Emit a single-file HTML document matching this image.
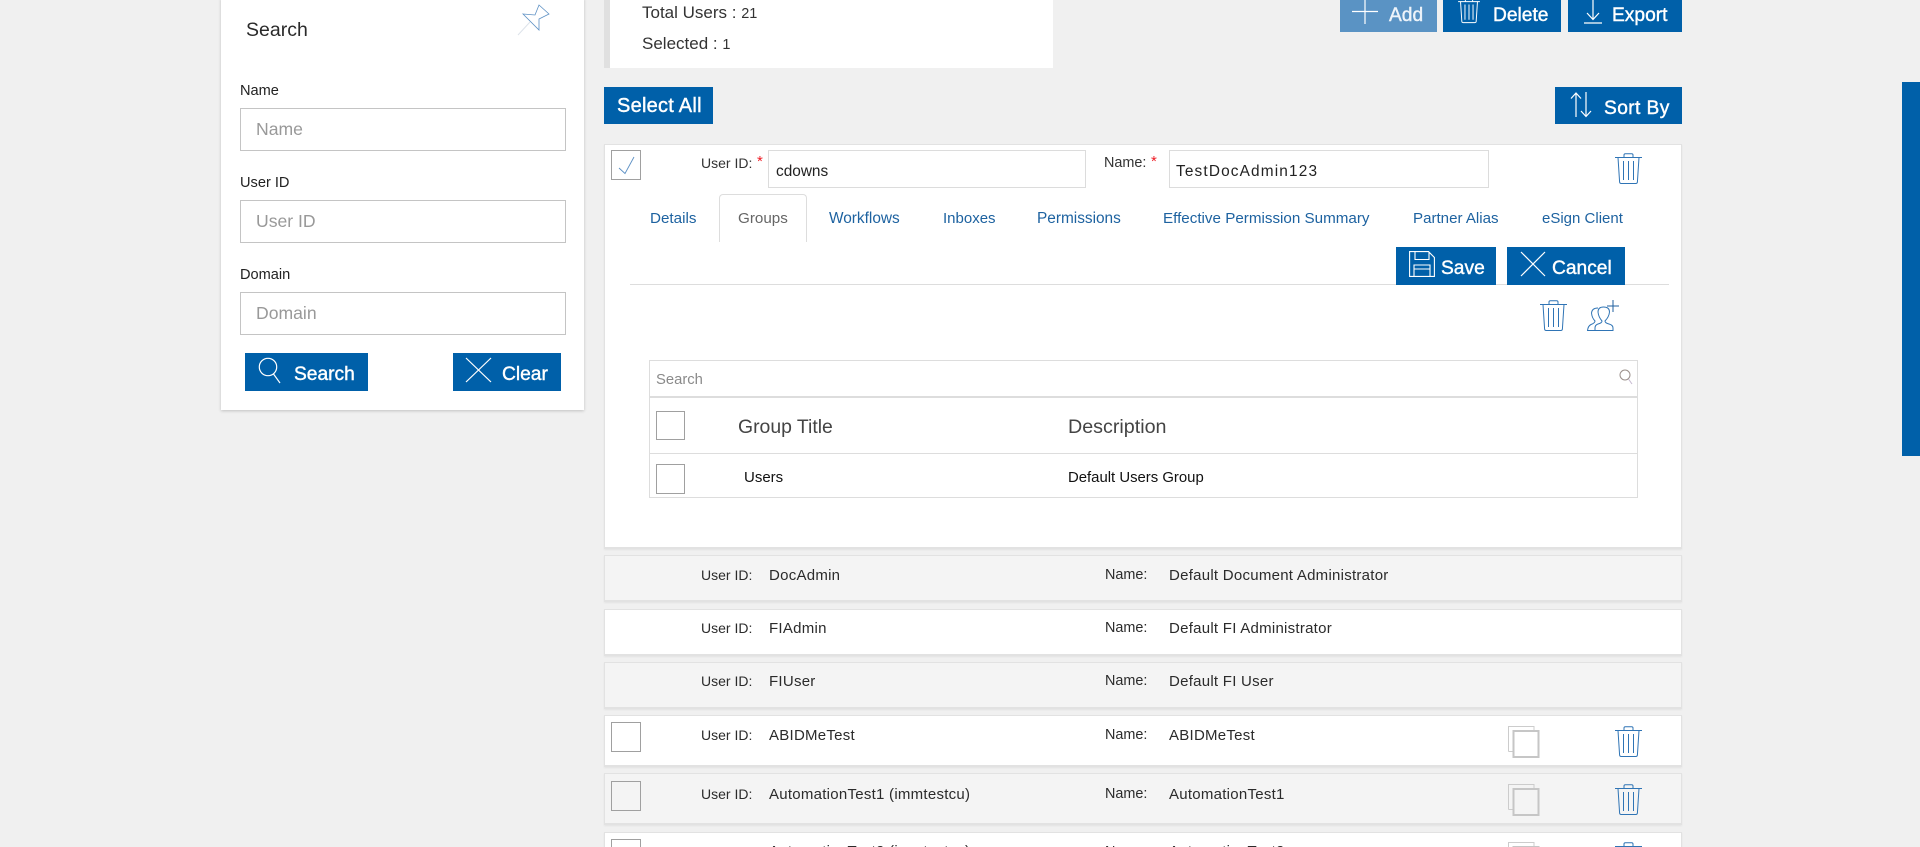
<!DOCTYPE html>
<html><head><meta charset="utf-8"><title>Users</title>
<style>
html,body{margin:0;padding:0;width:1920px;height:847px;overflow:hidden;background:#f0f0f0;font-family:"Liberation Sans",sans-serif;}
#p{position:relative;width:1920px;height:847px;overflow:hidden;}
#p div,#p svg,#p span.t{position:absolute;box-sizing:border-box;}
.t{white-space:nowrap;line-height:20px;color:#2b2b2b;font-size:14px;position:absolute;}
.v{font-size:15px;letter-spacing:.26px;}
.n{font-size:14.4px;}
.b{background:#0060a9;}
.w{color:#fff;font-size:19.2px;line-height:24px;-webkit-text-stroke:.4px #fff;}
.in{background:#fff;border:1px solid #c4c4c4;}
.in2{background:#fff;border:1px solid #dcdcdc;}
.ph{color:#999;font-size:17.6px;}
.cb{width:30px;height:30px;border:1px solid #a0a0a0;}
.row{left:604px;width:1078px;border:1px solid #e2e2e2;border-bottom:2px solid #e2e2e2;box-shadow:0 1px 2px rgba(0,0,0,.06);}
.tab{color:#1d62a0;font-size:15.2px;}
svg{overflow:visible;fill:none;}
</style></head><body><div id="p">

<svg width="0" height="0" style="left:0;top:0"><defs>
<g id="trash"><path d="M0 4.5H27M9 4.5V2Q9 .7 10.3 .7H16.7Q18 .7 18 2V4.5M3 4.5L4.6 29Q4.7 30.5 6.2 30.5H20.8Q22.3 30.5 22.4 29L24 4.5M8.5 8V27M13.5 8V27M18.5 8V27"/></g>
<g id="copy"><path d="M.5 25.5V.5H26V4" stroke="#ccc" stroke-width="1"/><path d="M5.5 25.5H.5" stroke="#ccc"/><rect x="5.5" y="5" width="25" height="26" stroke="#c6c6c6" stroke-width="2"/></g>
</defs></svg>

<!-- search panel -->
<div style="left:221px;top:-2px;width:363px;height:412px;background:#fff;box-shadow:0 1px 3px rgba(0,0,0,.2)"></div>
<span class="t" style="left:246px;top:20px;font-size:19.5px;line-height:20px;color:#2a2a2a">Search</span>
<svg style="left:518px;top:4px" width="32" height="32" viewBox="0 0 32 32"><path d="M5 10L17 11L21 1L31 10L21 15L21 26Z" stroke="#5c90c4" stroke-width=".8"/><path d="M12 18L0 31" stroke="#dde3ea" stroke-width="1"/></svg>
<span class="t" style="left:240px;top:81px;font-size:14.6px;color:#222">Name</span>
<div class="in" style="left:240px;top:108px;width:326px;height:43px"></div>
<span class="t ph" style="left:256px;top:119px">Name</span>
<span class="t" style="left:240px;top:173px;font-size:14.6px;color:#222">User ID</span>
<div class="in" style="left:240px;top:200px;width:326px;height:43px"></div>
<span class="t ph" style="left:256px;top:211px">User ID</span>
<span class="t" style="left:240px;top:265px;font-size:14.6px;color:#222">Domain</span>
<div class="in" style="left:240px;top:292px;width:326px;height:43px"></div>
<span class="t ph" style="left:256px;top:303px">Domain</span>
<div class="b" style="left:245px;top:353px;width:123px;height:38px"></div>
<svg style="left:258px;top:357px" width="24" height="27" viewBox="0 0 24 27" stroke="#fff" stroke-width="1.2"><circle cx="10" cy="10" r="8.7"/><path d="M15.5 17L22 26"/></svg>
<span class="t w" style="left:294px;top:363px">Search</span>
<div class="b" style="left:453px;top:353px;width:108px;height:38px"></div>
<svg style="left:465px;top:357px" width="27" height="26" viewBox="0 0 27 26" stroke="#fff" stroke-width="1.2"><path d="M1 1L26 25M26 1L1 25"/></svg>
<span class="t w" style="left:502px;top:363px">Clear</span>

<!-- summary -->
<div style="left:604px;top:0;width:449px;height:68px;background:#fff;border-left:6px solid #e0e0e0"></div>
<span class="t" style="left:642px;top:2px;font-size:17px;color:#333;line-height:22px">Total Users : <span style="font-size:14.5px">21</span></span>
<span class="t" style="left:642px;top:33px;font-size:17px;color:#333;line-height:22px">Selected : <span style="font-size:14.5px">1</span></span>

<!-- top buttons -->
<div style="left:1340px;top:0;width:97px;height:32px;background:#5a93c4"></div>
<svg style="left:1352px;top:-1px" width="27" height="26" viewBox="0 0 27 26" stroke="#fff" stroke-width="1.2"><path d="M0 12.5H26M13 0V25"/></svg>
<span class="t w" style="left:1389px;top:4px;color:#eef4fa;-webkit-text-stroke:.4px #eef4fa">Add</span>
<div class="b" style="left:1443px;top:0;width:118px;height:32px"></div>
<svg style="left:1458px;top:-2px" width="22" height="25" viewBox="0 0 27 31" stroke="#fff" stroke-width="1.2"><use href="#trash"/></svg>
<span class="t w" style="left:1493px;top:4px">Delete</span>
<div class="b" style="left:1568px;top:0;width:114px;height:32px"></div>
<svg style="left:1584px;top:0" width="18" height="24" viewBox="0 0 18 24" stroke="#fff" stroke-width="1.2"><path d="M9 0V19M3 13L9 19.5L15 13M0 23H18"/></svg>
<span class="t w" style="left:1612px;top:4px">Export</span>

<div class="b" style="left:604px;top:87px;width:109px;height:37px"></div>
<span class="t w" style="left:617px;top:94px;font-size:20px;letter-spacing:.25px">Select All</span>
<div class="b" style="left:1555px;top:87px;width:127px;height:37px"></div>
<svg style="left:1570px;top:92px" width="22" height="26" viewBox="0 0 22 26" stroke="#fff" stroke-width="1.2"><path d="M6 25V1M1 6.5L6 1L11 6.5M16 0V24M11 19L16 24.5L21 19"/></svg>
<span class="t w" style="left:1604px;top:97px;letter-spacing:.4px">Sort By</span>

<!-- expanded card -->
<div style="left:604px;top:144px;width:1078px;height:405px;background:#fff;border:1px solid #e2e2e2;border-bottom:2px solid #e2e2e2;box-shadow:0 1px 2px rgba(0,0,0,.06)"></div>
<div class="cb" style="left:611px;top:150px"></div>
<svg style="left:618px;top:156px" width="18" height="19" viewBox="0 0 18 19" stroke="#5c90c4" stroke-width=".9"><path d="M1 12L7 17.5L16 1"/></svg>
<span class="t" style="left:701px;top:153px;font-size:14px;color:#333">User ID:</span>
<span class="t" style="left:757px;top:152px;font-size:15px;color:#ee1c25">*</span>
<div class="in2" style="left:768px;top:150px;width:318px;height:38px"></div>
<span class="t" style="left:776px;top:162px;font-size:15.4px;color:#222">cdowns</span>
<span class="t n" style="left:1104px;top:153px;color:#333">Name:</span>
<span class="t" style="left:1151px;top:152px;font-size:15px;color:#ee1c25">*</span>
<div class="in2" style="left:1169px;top:150px;width:320px;height:38px"></div>
<span class="t" style="left:1176px;top:162px;font-size:15.4px;letter-spacing:1.15px;color:#222">TestDocAdmin123</span>
<svg style="left:1615px;top:153px" width="27" height="31" viewBox="0 0 27 31" stroke="#2f74b5" stroke-width="1"><use href="#trash"/></svg>

<div style="left:719px;top:194px;width:88px;height:48px;border:1px solid #ddd;border-bottom:0;border-radius:4px 4px 0 0;background:#fff"></div>
<span class="t tab" style="left:650px;top:209px">Details</span>
<span class="t tab" style="left:738px;top:209px;color:#666">Groups</span>
<span class="t tab" style="left:829px;top:209px;font-size:15.4px">Workflows</span>
<span class="t tab" style="left:943px;top:209px;font-size:15px">Inboxes</span>
<span class="t tab" style="left:1037px;top:209px;font-size:15.4px">Permissions</span>
<span class="t tab" style="left:1163px;top:209px">Effective Permission Summary</span>
<span class="t tab" style="left:1413px;top:209px;font-size:15.1px">Partner Alias</span>
<span class="t tab" style="left:1542px;top:209px;font-size:15px">eSign Client</span>

<div style="left:630px;top:284px;width:1039px;height:1px;background:#ddd"></div>
<div class="b" style="left:1396px;top:247px;width:100px;height:38px"></div>
<svg style="left:1409px;top:251px" width="26" height="26" viewBox="0 0 26 26" stroke="#fff" stroke-width="1.1"><path d="M.6 .6H19.5L25.4 6.5V25.4H.6ZM6 .6V8.5H20V1M5 25.4V14H21V25.4M5 18H21"/></svg>
<span class="t w" style="left:1441px;top:257px">Save</span>
<div class="b" style="left:1507px;top:247px;width:118px;height:38px"></div>
<svg style="left:1520px;top:251px" width="26" height="26" viewBox="0 0 26 26" stroke="#fff" stroke-width="1.2"><path d="M1 1L25 25M25 1L1 25"/></svg>
<span class="t w" style="left:1552px;top:257px">Cancel</span>

<svg style="left:1540px;top:300px" width="27" height="31" viewBox="0 0 27 31" stroke="#2f74b5" stroke-width="1"><use href="#trash"/></svg>
<svg style="left:1587px;top:300px" width="33" height="32" viewBox="0 0 33 32" stroke="#2f74b5" stroke-width="1"><path d="M20 6H32M26 0V12" stroke="#1f5f9f"/><path d="M8 30.5H26V28Q26 25 22 24Q18 23 18 21Q22 17 22.5 12Q22.5 7 16.5 7Q11 7 11 12Q11.5 17 15 21Q15 23 11 24Q8 25 8 28Z"/><path d="M11 8Q5 8 4.5 13Q5 18 8 21Q8 23 4 24.5Q1 26 .5 30.5H8"/></svg>

<!-- table -->
<div style="left:649px;top:360px;width:989px;height:138px;border:1px solid #ddd;background:#fff"></div>
<div style="left:650px;top:396px;width:987px;height:2px;background:#ddd"></div>
<div style="left:650px;top:453px;width:987px;height:1px;background:#ddd"></div>
<span class="t" style="left:656px;top:370px;font-size:14.8px;color:#8a8a8a">Search</span>
<svg style="left:1619px;top:369px" width="14" height="16" viewBox="0 0 14 16" stroke="#9a8f8a" stroke-width="1"><circle cx="6" cy="6" r="5"/><path d="M9.5 10L13 15" stroke="#c6b9d0"/></svg>
<div class="cb" style="left:656px;top:411px;width:29px;height:29px"></div>
<span class="t" style="left:738px;top:417px;font-size:19.4px;color:#444">Group Title</span>
<span class="t" style="left:1068px;top:417px;font-size:19.7px;color:#444">Description</span>
<div class="cb" style="left:656px;top:464px;width:29px;height:30px"></div>
<span class="t" style="left:744px;top:468px;font-size:15px;color:#111">Users</span>
<span class="t" style="left:1068px;top:468px;font-size:14.9px;color:#111">Default Users Group</span>

<!-- rows -->
<div class="row" style="top:555px;height:47px;background:#f4f4f4"></div>
<span class="t" style="left:701px;top:565px">User ID:</span><span class="t v" style="left:769px;top:566px">DocAdmin</span>
<span class="t n" style="left:1105px;top:565px">Name:</span><span class="t v" style="left:1169px;top:566px">Default Document Administrator</span>

<div class="row" style="top:609px;height:47px;background:#fff"></div>
<span class="t" style="left:701px;top:618px">User ID:</span><span class="t v" style="left:769px;top:619px">FIAdmin</span>
<span class="t n" style="left:1105px;top:618px">Name:</span><span class="t v" style="left:1169px;top:619px">Default FI Administrator</span>

<div class="row" style="top:662px;height:47px;background:#f4f4f4"></div>
<span class="t" style="left:701px;top:671px">User ID:</span><span class="t v" style="left:769px;top:672px">FIUser</span>
<span class="t n" style="left:1105px;top:671px">Name:</span><span class="t v" style="left:1169px;top:672px">Default FI User</span>

<div class="row" style="top:715px;height:52px;background:#fff"></div>
<div class="cb" style="left:611px;top:722px"></div>
<span class="t" style="left:701px;top:725px">User ID:</span><span class="t v" style="left:769px;top:726px">ABIDMeTest</span>
<span class="t n" style="left:1105px;top:725px">Name:</span><span class="t v" style="left:1169px;top:726px">ABIDMeTest</span>
<svg style="left:1508px;top:726px" width="32" height="32" viewBox="0 0 32 32"><use href="#copy"/></svg>
<svg style="left:1615px;top:726px" width="27" height="31" viewBox="0 0 27 31" stroke="#2f74b5" stroke-width="1"><use href="#trash"/></svg>

<div class="row" style="top:773px;height:52px;background:#f4f4f4"></div>
<div class="cb" style="left:611px;top:781px"></div>
<span class="t" style="left:701px;top:784px">User ID:</span><span class="t v" style="left:769px;top:785px">AutomationTest1 (immtestcu)</span>
<span class="t n" style="left:1105px;top:784px">Name:</span><span class="t v" style="left:1169px;top:785px">AutomationTest1</span>
<svg style="left:1508px;top:784px" width="32" height="32" viewBox="0 0 32 32"><use href="#copy"/></svg>
<svg style="left:1615px;top:784px" width="27" height="31" viewBox="0 0 27 31" stroke="#2f74b5" stroke-width="1"><use href="#trash"/></svg>

<div class="row" style="top:832px;height:52px;background:#fff"></div>
<div class="cb" style="left:611px;top:839px"></div>
<span class="t" style="left:701px;top:842px">User ID:</span><span class="t v" style="left:769px;top:842px">AutomationTest2 (immtestcu)</span>
<span class="t n" style="left:1105px;top:842px">Name:</span><span class="t v" style="left:1169px;top:842px">AutomationTest2</span>
<svg style="left:1508px;top:842px" width="32" height="32" viewBox="0 0 32 32"><use href="#copy"/></svg>
<svg style="left:1615px;top:842px" width="27" height="31" viewBox="0 0 27 31" stroke="#2f74b5" stroke-width="1"><use href="#trash"/></svg>

<!-- scrollbar -->
<div class="b" style="left:1902px;top:82px;width:18px;height:374px"></div>
</div></body></html>
